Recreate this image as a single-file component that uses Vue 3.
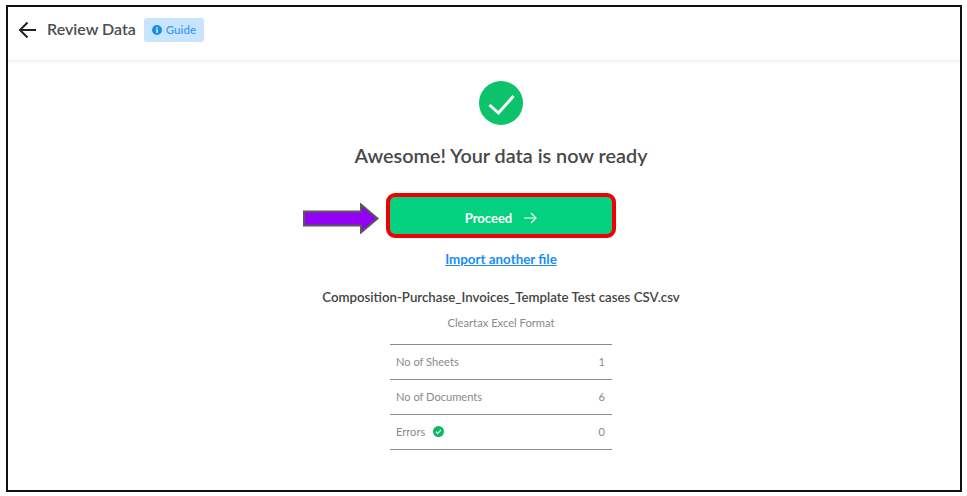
<script setup>
const rows = [
  { label: 'No of Sheets', value: 1 },
  { label: 'No of Documents', value: 6 },
  { label: 'Errors', value: 0, ok: true },
]
</script>

<template>
  <div class="frame">
    <header class="header">
      <svg class="back" width="20" height="18" viewBox="0 0 20 18" fill="none" stroke="#222" stroke-width="2">
        <path d="M18 9H2M9.500 1.500 2 9l7.500 7.500" />
      </svg>
      <h1 class="title">Review Data</h1>
      <span class="guide">
        <svg width="10" height="10" viewBox="0 0 10 10">
          <circle cx="5" cy="5" r="5" fill="#1a8cf0" />
          <rect x="4.300" y="4.200" width="1.400" height="3.600" fill="#fff" />
          <rect x="4.300" y="2.200" width="1.400" height="1.300" fill="#fff" />
        </svg>
        Guide
      </span>
    </header>
    <main class="body">
      <svg class="done" width="44" height="44" viewBox="0 0 44 44" fill="none">
        <circle cx="22" cy="22" r="22" fill="#0cc26a" />
        <path d="M10.500 24 19.500 32 34.500 15" stroke="#fff" stroke-width="3" />
      </svg>
      <h2 class="headline">Awesome! Your data is now ready</h2>
      <div class="cta">
        <svg class="pointer" width="76" height="31" viewBox="0 0 76 31">
          <path d="M1 8.500H58V1.500L74.500 15.500 58 29.500V22.500H1Z" fill="#9400f5" stroke="#595959" stroke-width="2" />
        </svg>
        <button class="proceed" type="button">
          Proceed
          <svg width="14" height="12" viewBox="0 0 14 12" fill="none" stroke="#fff" stroke-width="1.200">
            <path d="M1 6H13M8 1l5 5-5 5" />
          </svg>
        </button>
      </div>
      <a class="another" href="#">Import another file</a>
      <p class="file">Composition-Purchase_Invoices_Template Test cases CSV.csv</p>
      <p class="format">Cleartax Excel Format</p>
      <div class="stats">
        <div v-for="row in rows" :key="row.label" class="row">
          <span class="label">
            {{ row.label }}
            <svg v-if="row.ok" width="11" height="11" viewBox="0 0 11 11" fill="none">
              <circle cx="5.500" cy="5.500" r="5.500" fill="#0cb863" />
              <path d="M3 5.700 4.800 7.400 8 3.900" stroke="#fff" stroke-width="1.300" />
            </svg>
          </span>
          <span>{{ row.value }}</span>
        </div>
      </div>
    </main>
  </div>
</template>

<style>
html, body { margin: 0; background: #fff; }
</style>

<style scoped>
.frame {
  box-sizing: border-box;
  width: 956px;
  height: 487px;
  margin: 5px 0 0 6px;
  border: 2px solid #111;
  font-family: Lato, "Noto Sans", sans-serif;
  overflow: hidden;
}
.header {
  box-sizing: border-box;
  display: flex;
  align-items: center;
  height: 54px;
  padding: 0 0 8px 10px;
  border-bottom: 1px solid #eee;
  box-shadow: 0 1px 3px rgba(0, 0, 0, 0.06);
}
.back { margin-right: 9px; }
.title {
  margin: 0 8px 3px 0;
  font-size: 16px;
  font-weight: 600;
  color: #4d4d4d;
}
.guide {
  display: flex;
  align-items: center;
  gap: 4px;
  height: 24px;
  padding: 0 8px;
  border-radius: 3px;
  background: #c8e4ff;
  color: #3d9cf2;
  font-size: 11.500px;
  font-weight: 600;
}
.body {
  display: flex;
  flex-direction: column;
  align-items: center;
  padding: 20px 0 0 34px;
}
.done { display: block; }
.headline {
  margin: 17px 0 0;
  font-size: 19.800px;
  line-height: 26px;
  font-weight: 600;
  color: #484848;
}
.cta {
  position: relative;
  margin-top: 25px;
}
.pointer {
  position: absolute;
  right: 100%;
  top: 10px;
  margin-right: 7px;
}
.proceed {
  box-sizing: border-box;
  display: flex;
  align-items: center;
  justify-content: center;
  gap: 11px;
  width: 230px;
  height: 45px;
  padding-top: 6px;
  border: 4px solid #f00000;
  border-radius: 9px;
  background: #04d17f;
  color: #fff;
  font-family: inherit;
  font-size: 13px;
  font-weight: 700;
}
.another {
  margin-top: 12px;
  font-size: 13.400px;
  line-height: 18px;
  font-weight: 700;
  color: #1a8cf5;
}
.file {
  margin: 20px 0 0;
  font-size: 13.250px;
  line-height: 18px;
  font-weight: 600;
  color: #444;
}
.format {
  margin: 9px 0 0;
  font-size: 11.200px;
  line-height: 16px;
  color: #8a8a8a;
}
.stats {
  width: 222px;
  margin-top: 13px;
  border-top: 1px solid #8c8c8c;
}
.row {
  box-sizing: border-box;
  display: flex;
  align-items: center;
  justify-content: space-between;
  height: 35px;
  padding: 0 7px 2px 6px;
  border-bottom: 1px solid #8c8c8c;
  font-size: 11.100px;
  color: #8a8a8a;
}
.label {
  display: flex;
  align-items: center;
  gap: 8px;
}
</style>
